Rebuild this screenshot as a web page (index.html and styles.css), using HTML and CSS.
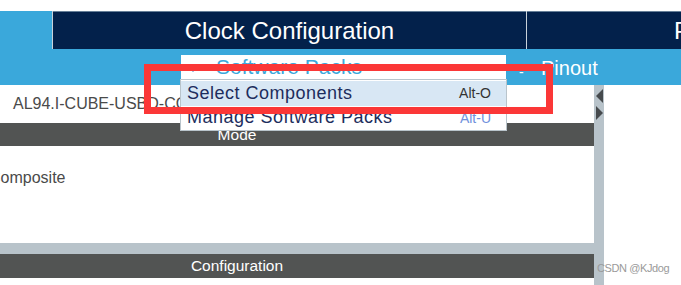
FILE: index.html
```html
<!DOCTYPE html>
<html lang="en">
<head>
    <meta charset="UTF-8">
    <meta name="viewport" content="width=device-width, initial-scale=1.0">
    <title>STM32CubeMX - Software Packs</title>
    <link rel="stylesheet" href="styles.css">
</head>
<body>
    <div class="app">
        <div class="top-gap"></div>
        <div class="tabs">
            <div class="tab tab-active"></div>
            <div class="tab-sep"></div>
            <div class="tab tab-clock">Clock Configuration</div>
            <div class="tab-sep"></div>
            <div class="tab tab-project">Project Manager</div>
        </div>
        <div class="subbar">
            <span class="subbar-dash">-</span>
            <span class="subbar-item">Pinout</span>
        </div>
        <div class="main">
            <div class="content">
                <div class="name-row">AL94.I-CUBE-USBD-COMPOSITE</div>
                <div class="section-title">Mode</div>
                <div class="mode-body">
                    <div class="mode-text">Composite</div>
                </div>
                <div class="gap-band"></div>
                <div class="section-title section-config">Configuration</div>
            </div>
            <div class="scrollbar">
                <span class="arrow arrow-left"></span>
                <span class="arrow arrow-right"></span>
            </div>
            <div class="side"></div>
        </div>

        <!-- dropdown menu opened from the Software Packs button -->
        <div class="menu">
            <div class="menu-head">
                <span class="menu-caret"></span>
                <span class="menu-title">Software Packs</span>
            </div>
            <div class="menu-list">
                <div class="menu-item menu-item-hover">
                    <span>Select Components</span>
                    <span class="shortcut">Alt-O</span>
                </div>
                <div class="menu-item">
                    <span>Manage Software Packs</span>
                    <span class="shortcut shortcut-light">Alt-U</span>
                </div>
            </div>
        </div>

        <div class="highlight"></div>
        <div class="watermark">CSDN @KJdog</div>
    </div>
</body>
</html>
```

FILE: styles.css
```css
body {
    margin: 0;
    padding: 0;
    font-family: "Liberation Sans", Arial, sans-serif;
    background-color: white;
    overflow: hidden;
}
.app {
    position: relative;
    width: 681px;
    height: 285px;
    overflow: hidden;
}
.top-gap {
    height: 11px;
}
.tabs {
    display: flex;
    height: 38px;
}
.tab {
    color: white;
    font-size: 24px;
    line-height: 37px;
    white-space: nowrap;
    overflow: hidden;
}
.tab-active {
    width: 52px;
    background-color: #3aa8db;
}
.tab-sep {
    width: 1px;
    background-color: #c9d2da;
}
.tab-clock {
    width: 473px;
    background-color: #03214b;
    border-top: 1px solid #667f98;
    text-align: center;
}
.tab-project {
    flex: 1;
    background-color: #03214b;
    border-top: 1px solid #667f98;
    padding-left: 147px;
}
.subbar {
    height: 36px;
    background-color: #3aa8db;
    color: white;
    display: flex;
    align-items: center;
    padding-left: 519px;
}
.subbar-dash {
    font-size: 14px;
    width: 22px;
    margin-top: 9px;
}
.subbar-item {
    font-size: 20px;
    margin-top: 2px;
}
.main {
    display: flex;
    height: 200px;
}
.content {
    width: 594px;
    display: flex;
    flex-direction: column;
}
.name-row {
    height: 38px;
    display: flex;
    align-items: center;
    padding-left: 13px;
    font-size: 16px;
    color: #4a4a4a;
    white-space: nowrap;
}
.section-title {
    height: 23px;
    background-color: #525453;
    color: white;
    font-size: 15.5px;
    line-height: 23px;
    text-align: center;
    padding-right: 120px;
}
.mode-body {
    height: 97px;
    padding-top: 23px;
    box-sizing: border-box;
}
.mode-text {
    font-size: 16px;
    color: #4a4a4a;
    text-indent: -11px;
}
.gap-band {
    height: 11px;
    background-color: #b8c3ca;
}
.section-config {
    height: 24px;
    line-height: 24px;
}
.scrollbar {
    width: 10px;
    background-color: #b8c3ca;
    display: flex;
    flex-direction: column;
    align-items: center;
    padding-top: 4px;
    gap: 3px;
}
.arrow {
    width: 0;
    height: 0;
    border-top: 7.5px solid transparent;
    border-bottom: 7.5px solid transparent;
}
.arrow-left {
    border-right: 7px solid #464a4d;
}
.arrow-right {
    border-left: 7px solid #464a4d;
}
.side {
    flex: 1;
    background-color: white;
}

/* dropdown */
.menu {
    position: absolute;
    left: 180px;
    top: 55px;
    width: 327px;
}
.menu-head {
    margin: 0 1px;
    height: 24px;
    background-color: white;
    display: flex;
    align-items: center;
    padding-left: 8px;
}
.menu-caret {
    width: 0;
    height: 0;
    border-left: 4px solid transparent;
    border-right: 4px solid transparent;
    border-top: 5px solid #2e6fb3;
    margin-right: 19px;
    margin-top: 4px;
}
.menu-title {
    font-size: 21px;
    color: #3aa8db;
}
.menu-list {
    border: 1px solid #b9c4cb;
    background-color: white;
    padding-top: 1px;
}
.menu-item {
    height: 24.5px;
    display: flex;
    align-items: center;
    justify-content: space-between;
    padding: 0 15px 0 6px;
    font-size: 18px;
    letter-spacing: 0.5px;
    color: #1d2d5d;
}
.menu-item-hover {
    background-color: #d8e7f4;
}
.shortcut {
    font-size: 14px;
    letter-spacing: 0;
    color: #333;
}
.shortcut-light {
    color: #6f90dc;
}

/* annotation overlay */
.highlight {
    position: absolute;
    left: 144px;
    top: 64px;
    width: 395px;
    height: 36px;
    border: 7px solid #fb3737;
}
.watermark {
    position: absolute;
    left: 597px;
    top: 262px;
    font-size: 11px;
    letter-spacing: -0.4px;
    color: #9a9a9a;
}
```
